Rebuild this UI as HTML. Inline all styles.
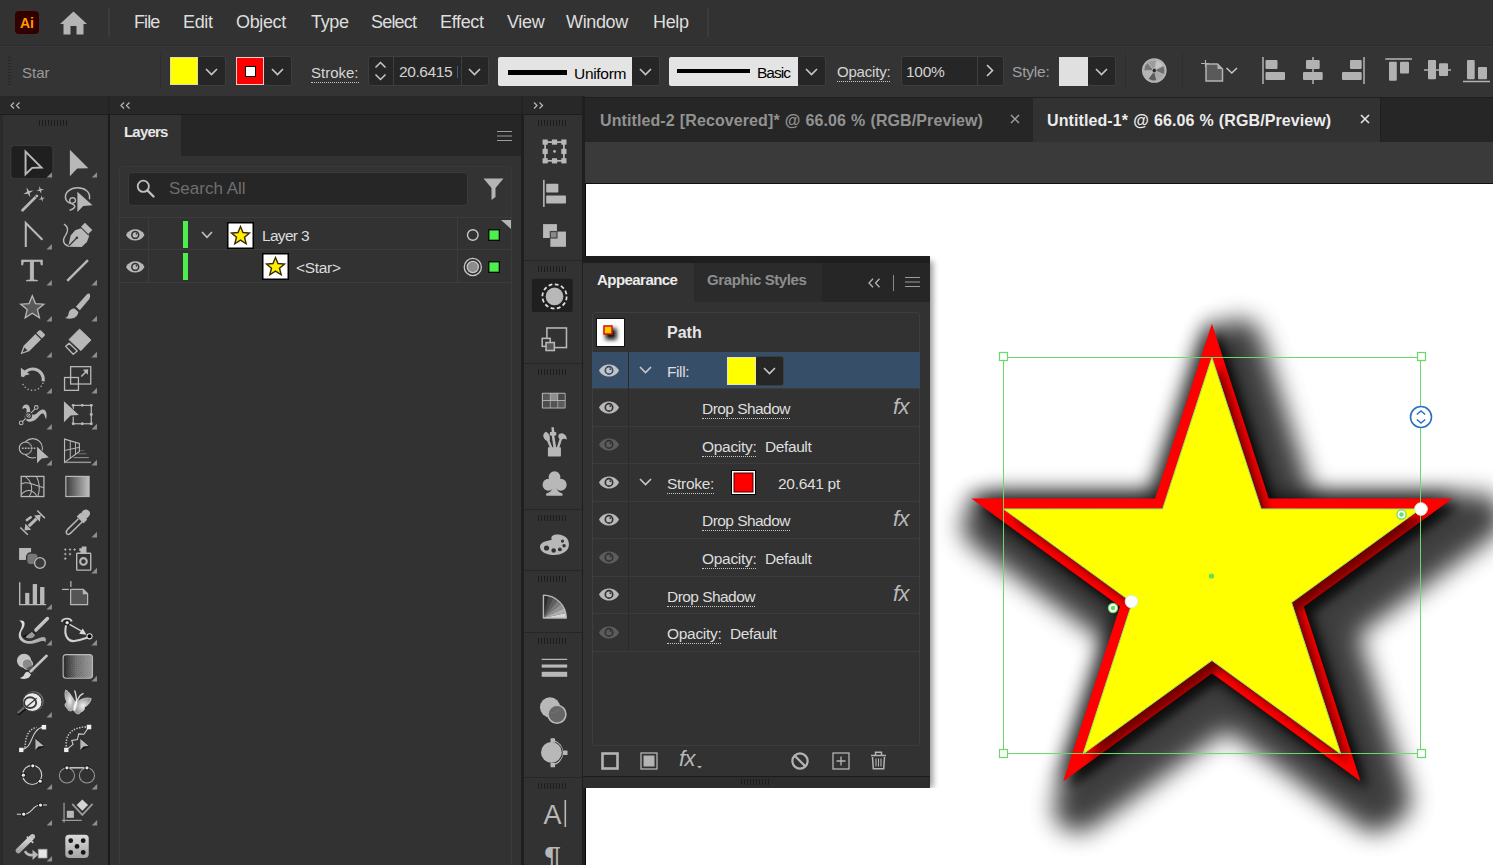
<!DOCTYPE html>
<html lang="en">
<head>
<meta charset="utf-8">
<title>Adobe Illustrator</title>
<style>
*{box-sizing:border-box;margin:0;padding:0}
html,body{width:1493px;height:865px;overflow:hidden;background:#323232}
body{position:relative;font-family:"Liberation Sans",sans-serif;color:#dcdcdc;font-size:15px}
.a{position:absolute}
.t{position:absolute;white-space:nowrap;line-height:1}
svg{position:absolute;overflow:visible}
#menubar{left:0;top:0;width:1493px;height:45px;background:#323232}
#menuline{left:0;top:45px;width:1493px;height:1px;background:#2b2b2b}
.mi{top:13px;font-size:18px;color:#dedede;letter-spacing:-0.35px}
#ctrl{left:0;top:46px;width:1493px;height:51px;background:#343434;box-shadow:inset 0 1px 0 #393939}
.dd{background:#262626;border:1px solid #3e3e3e;border-radius:3px}
.lbl{font-size:15px;color:#d6d6d6}
.dot{border-bottom:1px dotted #c8c8c8}
#strip{left:0;top:96px;width:585px;height:18px;background:#282828}
#stripline{left:0;top:114px;width:585px;height:1px;background:#1d1d1d}
#tools{left:3px;top:115px;width:105px;height:750px;background:#323232}
#layers{left:111px;top:115px;width:410px;height:750px;background:#323232}
#icons{left:524px;top:115px;width:58px;height:750px;background:#323232}
.gut{background:#1f1f1f}
.grip{height:6px;background:repeating-linear-gradient(to right,#1c1c1c 0,#1c1c1c 1px,transparent 1px,transparent 3px)}
</style>
</head>
<body>
<div class="a" id="menubar">
 <div class="a" style="left:15px;top:11px;width:24px;height:23px;background:#330000;border-radius:4px"></div>
 <div class="t" style="left:20px;top:15.5px;font-size:14px;font-weight:bold;color:#ff9a00;letter-spacing:-0.2px">Ai</div>
 <svg style="left:59px;top:11px" width="29" height="24" viewBox="0 0 29 24"><path d="M14.5 0.5 L28 13 L24.5 13 L24.5 23.5 L17.5 23.5 L17.5 15 L11.5 15 L11.5 23.5 L4.5 23.5 L4.5 13 L1 13 Z" fill="#b4b4b4"/></svg>
 <div class="a" style="left:108px;top:8px;width:2px;height:29px;background:#3c3c3c"></div>
 <div class="t mi" style="left:134px;letter-spacing:-0.9px">File</div>
 <div class="t mi" style="left:183px;letter-spacing:-0.35px">Edit</div>
 <div class="t mi" style="left:236px;letter-spacing:-0.35px">Object</div>
 <div class="t mi" style="left:311px;letter-spacing:-0.35px">Type</div>
 <div class="t mi" style="left:371px;letter-spacing:-0.8px">Select</div>
 <div class="t mi" style="left:440px;letter-spacing:-0.35px">Effect</div>
 <div class="t mi" style="left:507px;letter-spacing:-0.35px">View</div>
 <div class="t mi" style="left:566px;letter-spacing:-0.35px">Window</div>
 <div class="t mi" style="left:653px;letter-spacing:-0.35px">Help</div>
 <div class="a" style="left:707px;top:8px;width:2px;height:29px;background:#3c3c3c"></div>
</div>
<div class="a" id="menuline"></div>
<div class="a" id="ctrl">
 <div class="a" style="left:8px;top:11px;width:3px;height:28px;background:repeating-linear-gradient(to bottom,#262626 0,#262626 1px,transparent 1px,transparent 3px)"></div>
 <div class="t" style="left:22px;top:19px;font-size:15px;color:#9a9a9a">Star</div>
 <div class="a" style="left:160px;top:7px;width:1px;height:35px;background:#2e2e2e"></div>
 <div class="a dd" style="left:197px;top:10px;width:29px;height:30px"></div>
 <div class="a" style="left:170px;top:11px;width:28px;height:28px;background:#ffff00;border:1px solid #dcdcb0"></div>
 <svg style="left:205px;top:22px" width="13" height="8" viewBox="0 0 13 8"><path d="M1 1 L6.5 6.5 L12 1" fill="none" stroke="#c8c8c8" stroke-width="1.6"/></svg>
 <div class="a dd" style="left:263px;top:10px;width:29px;height:30px"></div>
 <div class="a" style="left:236px;top:11px;width:28px;height:28px;background:#ff0000;border:1px solid #f0c8c8"></div>
 <div class="a" style="left:245px;top:20px;width:11px;height:11px;background:#fff;border:1.3px solid #000"></div>
 <svg style="left:271px;top:22px" width="13" height="8" viewBox="0 0 13 8"><path d="M1 1 L6.5 6.5 L12 1" fill="none" stroke="#c8c8c8" stroke-width="1.6"/></svg>
 <div class="t lbl dot" style="left:311px;top:19px;padding-bottom:2px">Stroke:</div>
 <div class="a dd" style="left:368px;top:10px;width:121px;height:30px"></div>
 <div class="a" style="left:393px;top:11px;width:1px;height:28px;background:#3e3e3e"></div>
 <div class="a" style="left:461px;top:11px;width:1px;height:28px;background:#3e3e3e"></div>
 <svg style="left:374px;top:15px" width="13" height="20" viewBox="0 0 13 20"><path d="M1.5 6.5 L6.5 1.5 L11.5 6.5 M1.5 13.5 L6.5 18.5 L11.5 13.5" fill="none" stroke="#c8c8c8" stroke-width="1.5"/></svg>
 <div class="t" style="left:399px;top:18px;font-size:15.5px;color:#d2d2d2;letter-spacing:-0.4px">20.6415</div>
 <div class="a" style="left:457px;top:20px;width:1px;height:12px;background:#3a5a80"></div>
 <svg style="left:468px;top:22px" width="13" height="8" viewBox="0 0 13 8"><path d="M1 1 L6.5 6.5 L12 1" fill="none" stroke="#c8c8c8" stroke-width="1.6"/></svg>
 <div class="a dd" style="left:631px;top:10px;width:29px;height:30px"></div>
 <div class="a" style="left:498px;top:11px;width:134px;height:29px;background:#e4e4e4;border-radius:2px 0 0 2px"></div>
 <div class="a" style="left:508px;top:24px;width:59px;height:5px;background:#000"></div>
 <div class="t" style="left:574px;top:20px;font-size:15.5px;color:#000;letter-spacing:-0.3px">Uniform</div>
 <svg style="left:639px;top:22px" width="13" height="8" viewBox="0 0 13 8"><path d="M1 1 L6.5 6.5 L12 1" fill="none" stroke="#c8c8c8" stroke-width="1.6"/></svg>
 <div class="a dd" style="left:797px;top:10px;width:29px;height:30px"></div>
 <div class="a" style="left:669px;top:11px;width:129px;height:29px;background:#e4e4e4;border-radius:2px 0 0 2px"></div>
 <div class="a" style="left:677px;top:23px;width:73px;height:4px;background:#000"></div>
 <div class="t" style="left:757px;top:19px;font-size:15.5px;color:#000;letter-spacing:-1px">Basic</div>
 <svg style="left:805px;top:22px" width="13" height="8" viewBox="0 0 13 8"><path d="M1 1 L6.5 6.5 L12 1" fill="none" stroke="#c8c8c8" stroke-width="1.6"/></svg>
 <div class="t lbl dot" style="left:837px;top:18px;padding-bottom:2px;letter-spacing:-0.2px">Opacity:</div>
 <div class="a dd" style="left:901px;top:10px;width:103px;height:30px"></div>
 <div class="a" style="left:977px;top:11px;width:1px;height:28px;background:#3e3e3e"></div>
 <div class="t" style="left:906px;top:18px;font-size:15.5px;color:#d2d2d2;letter-spacing:-0.3px">100%</div>
 <svg style="left:986px;top:18px" width="8" height="13" viewBox="0 0 8 13"><path d="M1 1 L6.5 6.5 L1 12" fill="none" stroke="#c8c8c8" stroke-width="1.6"/></svg>
 <div class="t" style="left:1012px;top:18px;font-size:15.5px;color:#a0a0a0;letter-spacing:-0.2px">Style:</div>
 <div class="a dd" style="left:1087px;top:10px;width:29px;height:30px"></div>
 <div class="a" style="left:1059px;top:11px;width:29px;height:29px;background:#e0e0e0"></div>
 <svg style="left:1095px;top:22px" width="13" height="8" viewBox="0 0 13 8"><path d="M1 1 L6.5 6.5 L12 1" fill="none" stroke="#c8c8c8" stroke-width="1.6"/></svg>
 <div class="a" style="left:1125px;top:6px;width:1px;height:37px;background:#2e2e2e"></div>
 <div class="a" style="left:1182px;top:6px;width:1px;height:37px;background:#2e2e2e"></div>
<svg style="left:0;top:0" width="1493" height="50" viewBox="0 0 1493 50"><circle cx="1154.3" cy="24.5" r="11.5" fill="#8c8c8c" stroke="#b8b8b8" stroke-width="1.6"/><path d="M1154.3 24.5 L1156.39 14.21 A10.5 10.5 0 0 1 1163.65 19.71 Z" fill="#c4c4c4" stroke="#b8b8b8" stroke-width="0.8"/><path d="M1154.3 24.5 L1163.65 19.71 A10.5 10.5 0 0 1 1163.87 28.82 Z" fill="#6e6e6e" stroke="#b8b8b8" stroke-width="0.8"/><path d="M1154.3 24.5 L1163.87 28.82 A10.5 10.5 0 0 1 1156.89 34.68 Z" fill="#a8a8a8" stroke="#b8b8b8" stroke-width="0.8"/><path d="M1154.3 24.5 L1156.89 34.68 A10.5 10.5 0 0 1 1147.96 32.87 Z" fill="#5c5c5c" stroke="#b8b8b8" stroke-width="0.8"/><path d="M1154.3 24.5 L1147.96 32.87 A10.5 10.5 0 0 1 1143.80 24.76 Z" fill="#b4b4b4" stroke="#b8b8b8" stroke-width="0.8"/><path d="M1154.3 24.5 L1143.80 24.76 A10.5 10.5 0 0 1 1147.56 16.45 Z" fill="#787878" stroke="#b8b8b8" stroke-width="0.8"/><path d="M1154.3 24.5 L1147.56 16.45 A10.5 10.5 0 0 1 1156.39 14.21 Z" fill="#9c9c9c" stroke="#b8b8b8" stroke-width="0.8"/><circle cx="1154.3" cy="24.5" r="2.2" fill="#2a2a2a" stroke="#b8b8b8" stroke-width="0.8"/><path d="M1205.5 14 L1205.5 21 M1201 17.5 L1209 17.5" stroke="#b2b2b2" stroke-width="1.2" fill="none"/>
<path d="M1206 18 L1217.5 18 L1222.5 23 L1222.5 35 L1206 35 Z" fill="#5a5a5a" stroke="#b2b2b2" stroke-width="1.5"/>
<path d="M1217.5 18 L1217.5 23 L1222.5 23 Z" fill="#b2b2b2"/>
<path d="M1226.5 22 L1231.8 27 L1237 22" fill="none" stroke="#c8c8c8" stroke-width="1.5"/><rect x="1262.25" y="11.0" width="1.5" height="27.0" fill="#b2b2b2"/><rect x="1265.5" y="14.0" width="12.0" height="9.0" rx="1" fill="#b2b2b2"/><rect x="1265.5" y="26.0" width="19.5" height="8.0" rx="1" fill="#b2b2b2"/><rect x="1312.25" y="11.0" width="1.5" height="27.0" fill="#b2b2b2"/><rect x="1306.0" y="14.0" width="13.7" height="9.0" rx="1" fill="#b2b2b2"/><rect x="1303.0" y="26.0" width="19.7" height="8.0" rx="1" fill="#b2b2b2"/><rect x="1363.25" y="11.0" width="1.5" height="27.0" fill="#b2b2b2"/><rect x="1350.0" y="14.0" width="11.7" height="9.0" rx="1" fill="#b2b2b2"/><rect x="1342.0" y="26.0" width="19.7" height="8.0" rx="1" fill="#b2b2b2"/><rect x="1385.3" y="12.25" width="26.7" height="1.5" fill="#b2b2b2"/><rect x="1389.0" y="15.7" width="7.8" height="19.0" rx="1" fill="#b2b2b2"/><rect x="1400.0" y="15.7" width="9.0" height="11.9" rx="1" fill="#b2b2b2"/><rect x="1424.0" y="23.25" width="27.0" height="1.5" fill="#b2b2b2"/><rect x="1428.0" y="14.0" width="8.0" height="19.3" rx="1" fill="#b2b2b2"/><rect x="1439.0" y="17.2" width="9.0" height="12.9" rx="1" fill="#b2b2b2"/><rect x="1463.0" y="34.75" width="27.0" height="1.5" fill="#b2b2b2"/><rect x="1467.0" y="14.0" width="7.7" height="19.3" rx="1" fill="#b2b2b2"/><rect x="1478.0" y="21.0" width="9.0" height="12.3" rx="1" fill="#b2b2b2"/></svg>
</div>
<div class="a" id="strip">
 <svg style="left:10px;top:6px" width="11" height="7" viewBox="0 0 11 7"><path d="M4 0.5 L1 3.5 L4 6.5 M9.5 0.5 L6.5 3.5 L9.5 6.5" fill="none" stroke="#b4b4b4" stroke-width="1.3"/></svg>
 <svg style="left:120px;top:6px" width="11" height="7" viewBox="0 0 11 7"><path d="M4 0.5 L1 3.5 L4 6.5 M9.5 0.5 L6.5 3.5 L9.5 6.5" fill="none" stroke="#b4b4b4" stroke-width="1.3"/></svg>
 <svg style="left:533px;top:6px" width="11" height="7" viewBox="0 0 11 7"><path d="M1 0.5 L4 3.5 L1 6.5 M6.5 0.5 L9.5 3.5 L6.5 6.5" fill="none" stroke="#b4b4b4" stroke-width="1.3"/></svg>
</div>
<div class="a" id="stripline"></div>
<div class="a" style="left:0;top:115px;width:3px;height:750px;background:#2a2a2a"></div>
<div class="a" style="left:108px;top:114px;width:2px;height:751px;background:#1b1b1b"></div>
<div class="a" style="left:108px;top:97px;width:2px;height:17px;background:#232323"></div>
<div class="a gut" style="left:521px;top:114px;width:3px;height:751px"></div>
<div class="a" style="left:521px;top:97px;width:2px;height:17px;background:#232323"></div>
<div class="a gut" style="left:582px;top:96px;width:3px;height:769px"></div>
<div class="a" id="tools"></div>
<div class="a grip" style="left:39px;top:120px;width:29px"></div>
<svg style="left:0;top:0;overflow:hidden" width="110" height="865" viewBox="0 0 110 865">
<g transform="translate(0,90) scale(0.15029)"><rect x="72" y="370" width="280" height="220" rx="22" fill="#1f1f1f" stroke="#3e3e3e" stroke-width="6"/><polygon points="170,410 170,560 214,518 276,516" fill="none" stroke="#b8b8b8" stroke-width="13" stroke-linejoin="miter"/><polygon points="465,398 465,574 514,522 588,520" fill="#b8b8b8"/><polygon points="346,547 346,583 310,583" fill="#8e8e8e"/><polygon points="646,547 646,583 610,583" fill="#8e8e8e"/></g>
<g transform="translate(8,180) scale(0.08673)"><line x1="168" y1="348" x2="333" y2="183" stroke="#b8b8b8" stroke-width="32" stroke-linecap="round"/><line x1="305" y1="180" x2="338" y2="213" stroke="#323232" stroke-width="7"/><polygon points="213.8,83.7 242.2,126.6 293.3,120.8 250.4,149.2 256.2,200.3 227.8,157.4 176.7,163.2 219.6,134.8" fill="#b8b8b8"/><polygon points="360.1,70.6 378.5,103.7 416.4,103.1 383.3,121.5 383.9,159.4 365.5,126.3 327.6,126.9 360.7,108.5" fill="#b8b8b8"/><polygon points="380.2,178.3 395.5,205.5 426.7,205.2 399.5,220.5 399.8,251.7 384.5,224.5 353.3,224.8 380.5,209.5" fill="#b8b8b8"/><path d="M 940 215 C 950 130 880 90 800 90 C 720 90 660 140 662 200 C 664 250 720 285 762 262 C 792 245 780 205 745 205 C 712 205 700 240 722 262 C 742 285 775 280 770 305 C 765 335 738 338 715 347" fill="none" stroke="#b8b8b8" stroke-width="17" stroke-linecap="round"/><polygon points="792,120 792,385 872,305 990,296" fill="#323232"/><polygon points="800,135 800,368 868,300 975,292" fill="#b8b8b8"/><path d="M 205 772 L 205 495 L 397 690" fill="none" stroke="#b8b8b8" stroke-width="24" stroke-linejoin="miter"/><polygon points="506,738 506,800 444,800" fill="#8e8e8e"/><path d="M 650 512 C 705 545 690 600 660 645 C 622 695 640 752 700 762" fill="none" stroke="#b8b8b8" stroke-width="15" stroke-linecap="round"/><polygon points="693,770 722,640 775,580 850,553 938,641 910,716 850,772" fill="#b8b8b8"/><line x1="700" y1="762" x2="792" y2="668" stroke="#323232" stroke-width="15"/><circle cx="795" cy="665" r="14" fill="#323232"/><polygon points="887,493 972,576 926,622 842,538" fill="#b8b8b8"/><line x1="838" y1="548" x2="930" y2="640" stroke="#323232" stroke-width="10"/></g>
<g transform="translate(8,252) scale(0.08673)"><line x1="683" y1="332" x2="922" y2="93" stroke="#b8b8b8" stroke-width="28"/><polygon points="506,323 506,385 444,385" fill="#8e8e8e"/><polygon points="1026,321 1026,385 962,385" fill="#8e8e8e"/><polygon points="280.0,505.0 316.4,594.8 413.1,601.7 339.0,664.2 362.3,758.3 280.0,707.0 197.7,758.3 221.0,664.2 146.9,601.7 243.6,594.8" fill="#585858" stroke="#b8b8b8" stroke-width="15" stroke-linejoin="miter"/><path d="M 782 632 L 905 492 Q 932 468 945 488 Q 952 515 935 545 L 828 672 Z" fill="#b8b8b8"/><path d="M 768 652 L 812 692 Q 800 760 730 768 Q 690 771 658 760 Q 700 745 700 700 Q 712 655 768 652 Z" fill="#b8b8b8"/><polygon points="506,738 506,800 444,800" fill="#8e8e8e"/><polygon points="1026,736 1026,800 962,800" fill="#8e8e8e"/></g>
<g transform="translate(8,324) scale(0.08673)"><polygon points="145.0,350.0 180.4,251.0 316.8,114.5 380.5,178.2 244.0,314.6" fill="#b8b8b8"/><polygon points="167.6,327.4 190.3,270.8 224.2,304.7" fill="#323232"/><polygon points="326.7,104.6 360.7,70.7 377.6,70.7 424.3,117.4 424.3,134.3 390.4,168.3" fill="#b8b8b8"/><polygon points="506,323 506,385 444,385" fill="#8e8e8e"/><polygon points="1026,321 1026,385 962,385" fill="#8e8e8e"/><polygon points="825,58 957,185 840,307 703,180" fill="#b8b8b8" stroke="#b8b8b8" stroke-width="10" stroke-linejoin="round"/><polygon points="705,222 798,312 752,348 665,258" fill="none" stroke="#b8b8b8" stroke-width="16" stroke-linejoin="round"/><path d="M 167.2 608.4 A 122 122 0 0 1 405.1 661.2" fill="none" stroke="#b8b8b8" stroke-width="36"/><polygon points="148,505 150,605 250,578" fill="#b8b8b8"/><circle cx="402.5" cy="682.8" r="9" fill="#b8b8b8"/><circle cx="382.1" cy="718.7" r="9" fill="#b8b8b8"/><circle cx="351.2" cy="746.0" r="9" fill="#b8b8b8"/><circle cx="313.1" cy="761.8" r="9" fill="#b8b8b8"/><circle cx="271.9" cy="764.3" r="9" fill="#b8b8b8"/><circle cx="232.2" cy="753.3" r="9" fill="#b8b8b8"/><circle cx="198.2" cy="729.9" r="9" fill="#b8b8b8"/><circle cx="173.6" cy="696.7" r="9" fill="#b8b8b8"/><rect x="722" y="492" width="232" height="200" fill="none" stroke="#b8b8b8" stroke-width="15"/><rect x="652" y="617" width="160" height="148" fill="none" stroke="#b8b8b8" stroke-width="15"/><line x1="845" y1="605" x2="905" y2="545" stroke="#b8b8b8" stroke-width="18"/><polygon points="862,528 925,522 920,586" fill="#b8b8b8"/><polygon points="506,738 506,800 444,800" fill="#8e8e8e"/><polygon points="1026,736 1026,800 962,800" fill="#8e8e8e"/></g>
<g transform="translate(8,396) scale(0.08673)"><path d="M 163 152 C 163 100 215 82 238 110 C 268 150 240 205 287 215 C 332 222 350 160 402 155 C 445 152 452 215 440 268 C 425 250 425 208 400 203 C 360 203 340 292 260 296 C 210 296 178 260 198 215 C 213 185 225 160 205 142 C 190 132 175 147 163 152 Z" fill="#b8b8b8"/><line x1="165" y1="298" x2="312" y2="148" stroke="#323232" stroke-width="30"/><line x1="165" y1="298" x2="312" y2="148" stroke="#b8b8b8" stroke-width="13"/><circle cx="237" cy="226" r="34" fill="none" stroke="#323232" stroke-width="14"/><circle cx="152" cy="310" r="21" fill="#323232" stroke="#b8b8b8" stroke-width="12"/><circle cx="326" cy="132" r="21" fill="#323232" stroke="#b8b8b8" stroke-width="12"/><polygon points="506,323 506,385 444,385" fill="#8e8e8e"/><polygon points="1026,321 1026,385 962,385" fill="#8e8e8e"/><rect x="752" y="108" width="208" height="212" fill="none" stroke="#b8b8b8" stroke-width="14"/><circle cx="752" cy="108" r="17" fill="#b8b8b8"/><circle cx="856" cy="108" r="17" fill="#b8b8b8"/><circle cx="960" cy="108" r="17" fill="#b8b8b8"/><circle cx="960" cy="214" r="17" fill="#b8b8b8"/><circle cx="752" cy="320" r="17" fill="#b8b8b8"/><circle cx="856" cy="320" r="17" fill="#b8b8b8"/><circle cx="960" cy="320" r="17" fill="#b8b8b8"/><polygon points="632,40 632,330 725,240 840,232" fill="#323232"/><polygon points="645,60 645,302 722,226 818,220" fill="#b8b8b8"/><circle cx="285" cy="603" r="112" fill="none" stroke="#b8b8b8" stroke-width="13"/><circle cx="202" cy="603" r="72" fill="#323232" stroke="#b8b8b8" stroke-width="13"/><path d="M 232 538 A 72 72 0 0 1 232 668" fill="none" stroke="#777" stroke-width="12"/><line x1="160" y1="603" x2="330" y2="603" stroke="#b8b8b8" stroke-width="18" stroke-dasharray="20 14"/><polygon points="322,560 322,800 395,735 492,722" fill="#323232"/><polygon points="335,585 335,775 388,722 470,708" fill="#b8b8b8"/><polygon points="652,497 823,548 823,640 652,765" fill="none" stroke="#b8b8b8" stroke-width="13" stroke-linejoin="miter"/><line x1="718" y1="517" x2="718" y2="718" stroke="#b8b8b8" stroke-width="11"/><line x1="778" y1="535" x2="778" y2="675" stroke="#b8b8b8" stroke-width="11"/><line x1="652" y1="628" x2="823" y2="592" stroke="#b8b8b8" stroke-width="11"/><line x1="832" y1="630" x2="880" y2="630" stroke="#777" stroke-width="8"/><line x1="805" y1="666" x2="905" y2="666" stroke="#7e7e7e" stroke-width="10"/><line x1="758" y1="710" x2="932" y2="710" stroke="#888" stroke-width="13"/><line x1="655" y1="765" x2="957" y2="765" stroke="#959595" stroke-width="17"/><polygon points="506,738 506,800 444,800" fill="#8e8e8e"/><polygon points="1026,736 1026,800 962,800" fill="#8e8e8e"/></g>
<g transform="translate(8,468) scale(0.08673)"><rect x="152" y="97" width="262" height="232" fill="none" stroke="#b8b8b8" stroke-width="15"/><path d="M 200 100 C 270 150 300 250 245 325 M 330 100 C 370 180 370 250 345 325 M 155 185 C 240 140 320 215 412 225 M 155 305 C 215 235 290 250 330 320" fill="none" stroke="#b8b8b8" stroke-width="12"/><defs><linearGradient id="tg1" x1="0" x2="1" y1="0" y2="0"><stop offset="0" stop-color="#3a3a3a"/><stop offset="1" stop-color="#c0c0c0"/></linearGradient></defs><rect x="667" y="97" width="268" height="232" fill="url(#tg1)" stroke="#b8b8b8" stroke-width="14"/><line x1="142" y1="687" x2="228" y2="770" stroke="#b8b8b8" stroke-width="17"/><line x1="337" y1="490" x2="425" y2="578" stroke="#b8b8b8" stroke-width="17"/><line x1="240" y1="670" x2="330" y2="585" stroke="#b8b8b8" stroke-width="36"/><polygon points="190,722 200,640 268,712" fill="#b8b8b8"/><polygon points="378,540 366,620 300,548" fill="#b8b8b8"/><line x1="218" y1="600" x2="262" y2="568" stroke="#b8b8b8" stroke-width="30" stroke-linecap="round"/><path d="M 812 585 L 690 705 C 660 735 670 770 700 765 C 720 760 730 745 745 730 L 865 612" fill="none" stroke="#b8b8b8" stroke-width="17" stroke-linejoin="round"/><path d="M 800 560 L 835 525 L 848 538 C 850 500 890 470 925 495 C 960 525 925 570 890 580 L 905 595 L 870 630 Z" fill="#b8b8b8" stroke="#b8b8b8" stroke-width="12" stroke-linejoin="round"/><polygon points="1026,736 1026,800 962,800" fill="#8e8e8e"/></g>
<g transform="translate(8,540) scale(0.08673)"><rect x="128" y="92" width="138" height="138" fill="#b8b8b8"/><rect x="215" y="150" width="132" height="135" rx="45" fill="#777" stroke="#323232" stroke-width="16"/><circle cx="368" cy="265" r="72" fill="#323232"/><circle cx="368" cy="265" r="62" fill="#3a3a3a" stroke="#b8b8b8" stroke-width="16"/><rect x="792" y="152" width="162" height="195" rx="8" fill="none" stroke="#b8b8b8" stroke-width="16"/><circle cx="870" cy="247" r="38" fill="none" stroke="#b8b8b8" stroke-width="24"/><path d="M 835 150 V 128 H 822 V 95 H 850 V 75 H 905 V 150 Z" fill="#b8b8b8"/><polygon points="660.0,91.0 666.4,103.6 679.0,110.0 666.4,116.4 660.0,129.0 653.6,116.4 641.0,110.0 653.6,103.6" fill="#b8b8b8"/><polygon points="715.0,91.0 721.4,103.6 734.0,110.0 721.4,116.4 715.0,129.0 708.6,116.4 696.0,110.0 708.6,103.6" fill="#b8b8b8"/><polygon points="768.0,91.0 774.4,103.6 787.0,110.0 774.4,116.4 768.0,129.0 761.6,116.4 749.0,110.0 761.6,103.6" fill="#b8b8b8"/><polygon points="660.0,143.0 666.4,155.6 679.0,162.0 666.4,168.4 660.0,181.0 653.6,168.4 641.0,162.0 653.6,155.6" fill="#b8b8b8"/><polygon points="715.0,143.0 721.4,155.6 734.0,162.0 721.4,168.4 715.0,181.0 708.6,168.4 696.0,162.0 708.6,155.6" fill="#b8b8b8"/><polygon points="660.0,196.0 666.4,208.6 679.0,215.0 666.4,221.4 660.0,234.0 653.6,221.4 641.0,215.0 653.6,208.6" fill="#b8b8b8"/><polygon points="1026,321 1026,385 962,385" fill="#8e8e8e"/><path d="M 135 488 V 745 H 440" fill="none" stroke="#b8b8b8" stroke-width="16"/><rect x="198" y="610" width="48" height="135" fill="#b8b8b8"/><rect x="285" y="508" width="50" height="237" fill="#b8b8b8"/><rect x="370" y="542" width="50" height="203" fill="#b8b8b8"/><polygon points="506,738 506,800 444,800" fill="#8e8e8e"/><line x1="725" y1="473" x2="725" y2="542" stroke="#b8b8b8" stroke-width="14"/><line x1="623" y1="570" x2="702" y2="570" stroke="#b8b8b8" stroke-width="14"/><polygon points="722,570 868,570 918,620 918,745 722,745" fill="#555" stroke="#b8b8b8" stroke-width="14" stroke-linejoin="round"/><polygon points="862,566 862,626 922,626" fill="#b8b8b8"/></g>
<g transform="translate(8,612) scale(0.08673)"><defs><linearGradient id="tg2" x1="0" x2="1" y1="0" y2="1"><stop offset="0" stop-color="#e8e8e8"/><stop offset="1" stop-color="#a0a0a0"/></linearGradient><linearGradient id="tg3" x1="0" x2="1" y1="0" y2="0"><stop offset="0" stop-color="#1c1c1c"/><stop offset="0.45" stop-color="#6e6e6e"/><stop offset="1" stop-color="#9a9a9a"/></linearGradient><pattern id="tn" width="26" height="26" patternUnits="userSpaceOnUse"><circle cx="6" cy="7" r="4" fill="#cfcfcf" opacity=".55"/><circle cx="19" cy="17" r="4.5" fill="#e0e0e0" opacity=".45"/><circle cx="17" cy="4" r="3" fill="#000" opacity=".45"/><circle cx="5" cy="20" r="3.5" fill="#000" opacity=".4"/></pattern></defs><path d="M 130 100 C 205 85 205 150 165 205 C 135 250 145 300 205 328 C 285 355 330 292 418 288 C 442 298 442 330 430 348 C 400 305 330 372 232 366 C 150 360 108 300 128 240 C 148 190 190 130 130 100 Z" fill="url(#tg2)"/><path d="M 165 275 C 200 310 260 320 300 290 L 315 245 L 270 225 C 235 245 200 275 165 275 Z" fill="#0c0c0c"/><path d="M 200 290 C 225 265 245 245 275 228 L 312 262 C 305 300 250 320 200 290 Z" fill="#9a9a9a"/><line x1="322" y1="208" x2="455" y2="75" stroke="url(#tg2)" stroke-width="40" stroke-linecap="round"/><polygon points="506,323 506,385 444,385" fill="#8e8e8e"/><polygon points="1026,321 1026,385 962,385" fill="#8e8e8e"/><path d="M 668 160 C 640 280 700 345 765 335 C 840 320 900 300 930 290" fill="none" stroke="#d0d0d0" stroke-width="24" stroke-linecap="round"/><path d="M 620 115 C 625 70 720 60 735 110" fill="none" stroke="#d0d0d0" stroke-width="22"/><line x1="705" y1="140" x2="880" y2="240" stroke="#d8d8d8" stroke-width="14"/><polygon points="905,262 820,250 862,190" fill="#d8d8d8"/><circle cx="682" cy="125" r="26" fill="#e8e8e8" stroke="#111" stroke-width="12"/><circle cx="940" cy="280" r="30" fill="#050505" stroke="#d8d8d8" stroke-width="12"/><circle cx="185" cy="562" r="82" fill="#c4c4c4"/><circle cx="222" cy="600" r="60" fill="#8a8a8a" stroke="#e0e0e0" stroke-width="10"/><path d="M 205 655 L 285 610 L 300 700 Z" fill="#555"/><line x1="262" y1="685" x2="445" y2="505" stroke="url(#tg2)" stroke-width="30" stroke-linecap="round"/><path d="M 232 690 L 265 722 Q 250 770 185 772 Q 160 772 135 762 Q 185 745 190 715 Q 200 690 232 690 Z" fill="#d8d8d8"/><rect x="636" y="492" width="338" height="272" rx="34" fill="url(#tg3)"/><rect x="636" y="492" width="338" height="272" rx="34" fill="url(#tn)" stroke="#b8b8b8" stroke-width="13"/><polygon points="1026,736 1026,800 962,800" fill="#8e8e8e"/></g>
<g transform="translate(8,684) scale(0.08673)"><defs><radialGradient id="tg4" cx="0.5" cy="0.5" r="0.6"><stop offset="0" stop-color="#f0f0f0"/><stop offset="1" stop-color="#8a8a8a"/></radialGradient></defs><line x1="125" y1="338" x2="195" y2="278" stroke="#111" stroke-width="40" stroke-linecap="round"/><line x1="118" y1="330" x2="185" y2="272" stroke="#666" stroke-width="26" stroke-linecap="round"/><ellipse cx="292" cy="200" rx="122" ry="118" fill="#666"/><ellipse cx="280" cy="208" rx="112" ry="108" fill="#eaeaea" stroke="#1a1a1a" stroke-width="10"/><ellipse cx="255" cy="215" rx="70" ry="62" fill="none" stroke="#3a3a3a" stroke-width="22"/><line x1="205" y1="270" x2="330" y2="165" stroke="#3a3a3a" stroke-width="14"/><polygon points="506,323 506,385 444,385" fill="#8e8e8e"/><path d="M 770 200 C 740 150 700 80 665 70 C 650 110 655 170 680 210 C 650 225 650 260 680 275 C 690 310 720 320 745 300 Z" fill="url(#tg4)" stroke="#e0e0e0" stroke-width="8"/><path d="M 800 205 C 850 165 920 150 960 170 C 950 215 915 255 880 265 C 890 300 860 320 840 320 C 830 350 790 355 770 320 Z" fill="url(#tg4)" stroke="#e0e0e0" stroke-width="8"/><path d="M 790 185 C 785 140 780 100 770 80 M 800 190 C 815 150 840 120 865 110" fill="none" stroke="#d8d8d8" stroke-width="16" stroke-linecap="round"/><ellipse cx="775" cy="250" rx="16" ry="68" transform="rotate(14 775 250)" fill="#f4f4f4"/><path d="M 155 760 C 300 740 250 520 410 497" fill="none" stroke="#d0d0d0" stroke-width="12"/><path d="M 195 735 C 200 620 230 520 330 500" fill="none" stroke="#d0d0d0" stroke-width="16" stroke-dasharray="16 16"/><rect x="128" y="735" width="50" height="50" fill="#f0f0f0"/><rect x="388" y="472" width="52" height="52" fill="#f0f0f0"/><polygon points="320,622 420,722 318,762" fill="#111"/><polygon points="316,632 316,760 352,722 412,716" fill="#b8b8b8"/><path d="M 672 760 L 750 695 L 735 650 L 800 640 L 815 575 L 875 580 L 930 498" fill="none" stroke="#d0d0d0" stroke-width="12"/><path d="M 672 720 C 660 600 720 500 900 495" fill="none" stroke="#d0d0d0" stroke-width="16" stroke-dasharray="16 16"/><rect x="647" y="735" width="50" height="50" fill="#f0f0f0"/><rect x="908" y="470" width="52" height="52" fill="#f0f0f0"/><polygon points="838,622 940,722 836,762" fill="#111"/><polygon points="834,632 834,760 870,722 930,716" fill="#b8b8b8"/></g>
<g transform="translate(8,756) scale(0.12594)"><defs><linearGradient id="tg5" x1="0" x2="0" y1="0" y2="1"><stop offset="0" stop-color="#dcdcdc"/><stop offset="1" stop-color="#a4a4a4"/></linearGradient></defs><circle cx="192" cy="150" r="76" fill="none" stroke="#d0d0d0" stroke-width="9"/><circle cx="197" cy="78" r="20" fill="#161616"/><circle cx="197" cy="78" r="13" fill="#e8e8e8"/><circle cx="122" cy="152" r="20" fill="#161616"/><circle cx="122" cy="152" r="13" fill="#e8e8e8"/><circle cx="255" cy="200" r="20" fill="#161616"/><circle cx="255" cy="200" r="13" fill="#e8e8e8"/><polygon points="350,222 350,266 306,266" fill="#8e8e8e"/><polygon points="708,222 708,266 664,266" fill="#8e8e8e"/><circle cx="468" cy="155" r="60" fill="none" stroke="#9a9a9a" stroke-width="8"/><circle cx="627" cy="155" r="60" fill="none" stroke="#9a9a9a" stroke-width="8"/><line x1="468" y1="94" x2="627" y2="94" stroke="#e8e8e8" stroke-width="10"/><circle cx="468" cy="94" r="20" fill="#161616"/><circle cx="468" cy="94" r="13" fill="#e8e8e8"/><circle cx="627" cy="94" r="20" fill="#161616"/><circle cx="627" cy="94" r="13" fill="#e8e8e8"/><path d="M 70 462 L 125 462 C 195 462 190 390 258 390 L 310 390" fill="none" stroke="#d0d0d0" stroke-width="8"/><circle cx="125" cy="462" r="20" fill="#161616"/><circle cx="125" cy="462" r="13" fill="#e8e8e8"/><circle cx="258" cy="390" r="20" fill="#161616"/><circle cx="258" cy="390" r="13" fill="#e8e8e8"/><polygon points="350,508 350,552 306,552" fill="#8e8e8e"/><polygon points="708,508 708,552 664,552" fill="#8e8e8e"/><path d="M 445 372 V 528 M 428 511 H 585" fill="none" stroke="#9a9a9a" stroke-width="10"/><rect x="467" y="435" width="56" height="56" fill="#b8b8b8"/><path d="M 510 380 L 590 468 L 672 380" fill="none" stroke="#9a9a9a" stroke-width="14"/><polygon points="590,345 636,390 590,435 545,390" fill="#d4d4d4"/><line x1="82" y1="752" x2="185" y2="650" stroke="url(#tg5)" stroke-width="42" stroke-linecap="round"/><line x1="150" y1="640" x2="200" y2="690" stroke="#c8c8c8" stroke-width="14"/><circle cx="195" cy="640" r="20" fill="#c0c0c0"/><path d="M 135 755 C 150 785 180 790 205 785" fill="none" stroke="#b8b8b8" stroke-width="20"/><polygon points="195,745 240,785 195,825" fill="#b8b8b8"/><rect x="240" y="740" width="70" height="70" fill="#e6e6e6" stroke="#999" stroke-width="6"/><polygon points="350,794 350,838 306,838" fill="#8e8e8e"/><rect x="455" y="625" width="186" height="184" rx="28" fill="url(#tg5)"/><circle cx="498" cy="672" r="19" fill="#161616"/><circle cx="597" cy="672" r="19" fill="#161616"/><circle cx="548" cy="718" r="19" fill="#161616"/><circle cx="498" cy="766" r="19" fill="#161616"/><circle cx="597" cy="766" r="19" fill="#161616"/></g>
</svg>
<div class="t" style="left:21px;top:254.4px;font-family:'Liberation Serif',serif;font-size:32px;color:#b8b8b8;-webkit-text-stroke:0.6px #b8b8b8;transform:scaleX(1.12);transform-origin:left top">T</div>
<div class="a" id="layers">
 <div class="a" style="left:0;top:0;width:410px;height:41px;background:#262626"></div>
 <div class="a" style="left:0;top:0;width:70px;height:41px;background:#323232"></div>
 <div class="t" style="left:13px;top:9px;font-size:15px;font-weight:bold;color:#e6e6e6;letter-spacing:-0.8px">Layers</div>
 <div class="a" style="left:386px;top:16px;width:15px;height:1.2px;background:#9c9c9c;box-shadow:0 4.5px 0 #9c9c9c,0 9px 0 #9c9c9c"></div>
 <div class="a" style="left:8px;top:51px;width:393px;height:51px;border:1px solid #383838;border-bottom:none;border-radius:3px 3px 0 0;background:#333"></div>
 <div class="a" style="left:17px;top:57px;width:340px;height:34px;background:#262626;border:1px solid #3a3a3a;border-radius:4px"></div>
 <svg style="left:25px;top:64px" width="20" height="20" viewBox="0 0 20 20"><circle cx="7.3" cy="7.3" r="5.6" fill="none" stroke="#c0c0c0" stroke-width="1.8"/><path d="M11.5 11.5 L17.5 17.5" stroke="#c0c0c0" stroke-width="2.4" stroke-linecap="round"/></svg>
 <div class="t" style="left:58px;top:65px;font-size:17px;color:#6e6e6e;letter-spacing:0px">Search All</div>
 <svg style="left:372px;top:63px" width="21" height="23" viewBox="0 0 21 23"><path d="M0.5 0.5 L20.5 0.5 L12.5 10 L12.5 19 L8.5 22 L8.5 10 Z" fill="#b4b4b4"/></svg>
 <div class="a" style="left:8px;top:102px;width:393px;height:648px;border:1px solid #3c3c3c;border-bottom:none;background:#323232"></div>
 <div class="a" style="left:9px;top:134px;width:391px;height:1px;background:#3c3c3c"></div>
 <div class="a" style="left:9px;top:167px;width:391px;height:1px;background:#3c3c3c"></div>
 <div class="a" style="left:37px;top:103px;width:1px;height:64px;background:#3c3c3c"></div>
 <div class="a" style="left:346px;top:103px;width:1px;height:64px;background:#3c3c3c"></div>
<svg style="left:14.5px;top:113.5px" width="18.5" height="12" viewBox="0 0 20 13"><path d="M0 6.4 C4.2 -1.6 15.8 -1.6 20 6.4 C15.8 14.4 4.2 14.4 0 6.4 Z" fill="#b8b8b8"/><circle cx="10" cy="6.4" r="3.7" fill="#b8b8b8" stroke="#323232" stroke-width="1.7"/><circle cx="11.3" cy="5.2" r="0.9" fill="#323232"/></svg>
<svg style="left:14.5px;top:145.5px" width="18.5" height="12" viewBox="0 0 20 13"><path d="M0 6.4 C4.2 -1.6 15.8 -1.6 20 6.4 C15.8 14.4 4.2 14.4 0 6.4 Z" fill="#b8b8b8"/><circle cx="10" cy="6.4" r="3.7" fill="#b8b8b8" stroke="#323232" stroke-width="1.7"/><circle cx="11.3" cy="5.2" r="0.9" fill="#323232"/></svg>
 <div class="a" style="left:72px;top:106px;width:5px;height:27px;background:#4fee4f"></div>
 <div class="a" style="left:72px;top:138px;width:5px;height:27px;background:#4fee4f"></div>
 <svg style="left:90px;top:116px" width="12" height="8" viewBox="0 0 12 8"><path d="M1 1 L6 6.3 L11 1" fill="none" stroke="#c0c0c0" stroke-width="1.6"/></svg>
<svg style="left:116px;top:107px" width="27" height="27" viewBox="0 0 27 27"><rect x="0.75" y="0.75" width="25.5" height="25.5" fill="#fff" stroke="#000" stroke-width="1.5"/><path d="M13.5 4.5 L16 10.5 L22.5 11 L17.5 15.3 L19.2 21.8 L13.5 18.2 L7.8 21.8 L9.5 15.3 L4.5 11 L11 10.5 Z" fill="#ffee00" stroke="#3a2a00" stroke-width="1.4" stroke-linejoin="miter"/></svg>
<svg style="left:151px;top:138px" width="27" height="27" viewBox="0 0 27 27"><rect x="0.75" y="0.75" width="25.5" height="25.5" fill="#fff" stroke="#000" stroke-width="1.5"/><path d="M13.5 4.5 L16 10.5 L22.5 11 L17.5 15.3 L19.2 21.8 L13.5 18.2 L7.8 21.8 L9.5 15.3 L4.5 11 L11 10.5 Z" fill="#ffee00" stroke="#3a2a00" stroke-width="1.4" stroke-linejoin="miter"/></svg>
 <div class="t" style="left:151px;top:113px;font-size:15.5px;color:#dcdcdc;letter-spacing:-0.7px">Layer 3</div>
 <div class="t" style="left:185px;top:145px;font-size:15.5px;color:#dcdcdc;letter-spacing:-0.3px">&lt;Star&gt;</div>
 <svg style="left:350px;top:103px" width="52" height="64" viewBox="0 0 52 64">
  <circle cx="11.8" cy="17" r="5.3" fill="none" stroke="#c8c8c8" stroke-width="1.4"/>
  <rect x="27.8" y="11.8" width="10.5" height="10.5" fill="#4fee4f" stroke="#000" stroke-width="1.2"/>
  <path d="M40 2 L50 2 L50 11 Z" fill="#b4b4b4"/>
  <circle cx="11.8" cy="49" r="8.6" fill="none" stroke="#c8c8c8" stroke-width="1.3"/>
  <circle cx="11.8" cy="49" r="5.6" fill="#8c8c8c" stroke="#c8c8c8" stroke-width="1.2"/>
  <rect x="27.8" y="43.8" width="10.5" height="10.5" fill="#4fee4f" stroke="#000" stroke-width="1.2"/>
 </svg>
</div>
<div class="a" id="icons"></div>
<div class="a" style="left:524px;top:260px;width:58px;height:1px;background:#262626"></div>
<div class="a" style="left:524px;top:363px;width:58px;height:1px;background:#262626"></div>
<div class="a" style="left:524px;top:509px;width:58px;height:1px;background:#262626"></div>
<div class="a" style="left:524px;top:570px;width:58px;height:1px;background:#262626"></div>
<div class="a" style="left:524px;top:632px;width:58px;height:1px;background:#262626"></div>
<div class="a" style="left:524px;top:777px;width:58px;height:1px;background:#262626"></div>
<div class="a grip" style="left:538px;top:120px;width:29px"></div>
<div class="a grip" style="left:538px;top:266px;width:29px"></div>
<div class="a grip" style="left:538px;top:369px;width:29px"></div>
<div class="a grip" style="left:538px;top:515px;width:29px"></div>
<div class="a grip" style="left:538px;top:576px;width:29px"></div>
<div class="a grip" style="left:538px;top:638px;width:29px"></div>
<div class="a grip" style="left:538px;top:783px;width:29px"></div>
<svg style="left:0;top:0;overflow:hidden" width="585" height="865" viewBox="0 0 585 865">
<g transform="translate(524,114) scale(0.17340)"><rect x="122" y="162" width="108" height="108" fill="none" stroke="#b8b8b8" stroke-width="10"/><rect x="107" y="147" width="30" height="30" fill="#b8b8b8"/><rect x="161" y="147" width="30" height="30" fill="#b8b8b8"/><rect x="215" y="147" width="30" height="30" fill="#b8b8b8"/><rect x="107" y="201" width="30" height="30" fill="#b8b8b8"/><rect x="215" y="201" width="30" height="30" fill="#b8b8b8"/><rect x="107" y="255" width="30" height="30" fill="#b8b8b8"/><rect x="161" y="255" width="30" height="30" fill="#b8b8b8"/><rect x="215" y="255" width="30" height="30" fill="#b8b8b8"/><circle cx="176" cy="216" r="8" fill="#b8b8b8"/><rect x="110" y="380" width="9" height="156" fill="#b8b8b8"/><rect x="128" y="402" width="70" height="50" rx="4" fill="#b8b8b8"/><rect x="128" y="470" width="114" height="46" rx="4" fill="#b8b8b8"/><rect x="110" y="635" width="80" height="80" fill="#b8b8b8"/><rect x="152" y="678" width="90" height="88" fill="#b8b8b8"/><rect x="152" y="678" width="38" height="37" fill="#8a8a8a" stroke="#444" stroke-width="7"/></g>
<g transform="translate(524,260) scale(0.17340)"><rect x="45" y="108" width="236" height="192" rx="12" fill="#1f1f1f"/><circle cx="176" cy="210" r="51" fill="#b8b8b8"/><circle cx="176" cy="210" r="70" fill="none" stroke="#e0e0e0" stroke-width="10" stroke-dasharray="22 14.6"/><rect x="132" y="392" width="113" height="113" fill="none" stroke="#b8b8b8" stroke-width="9"/><rect x="105" y="452" width="46" height="46" fill="#323232" stroke="#b8b8b8" stroke-width="9"/><rect x="127" y="476" width="48" height="46" fill="#555" stroke="#b8b8b8" stroke-width="9"/></g>
<g transform="translate(524,380) scale(0.17340)"><rect x="103" y="73" width="137" height="92" rx="6" fill="#b8b8b8"/><rect x="109" y="79" width="40" height="37" fill="#585858"/><rect x="153" y="79" width="40" height="37" fill="#8e8e8e"/><rect x="197" y="79" width="38" height="37" fill="#484848"/><rect x="109" y="121" width="40" height="38" fill="#4c4c4c"/><rect x="153" y="121" width="40" height="38" fill="#545454"/><rect x="197" y="121" width="38" height="38" fill="#5c5c5c"/><rect x="138" y="388" width="75" height="53" rx="4" fill="#b8b8b8"/><path d="M 150 392 L 133 352 C 100 330 110 305 128 298 C 150 310 152 335 148 350 L 165 392 Z" fill="#b8b8b8"/><path d="M 170 392 L 160 322 L 148 318 L 150 300 L 160 300 L 158 272 L 172 272 L 175 300 L 186 302 L 186 318 L 175 322 L 186 392 Z" fill="#b8b8b8"/><path d="M 188 392 L 205 340 C 190 325 200 305 222 308 C 240 312 250 330 245 345 C 235 335 225 340 218 345 L 203 392 Z" fill="#b8b8b8"/><circle cx="176" cy="560" r="34" fill="#b8b8b8"/><circle cx="141" cy="604" r="34" fill="#b8b8b8"/><circle cx="212" cy="604" r="34" fill="#b8b8b8"/><path d="M 170 590 H 183 C 183 625 190 645 222 655 V 668 H 128 V 655 C 162 645 170 625 170 590 Z" fill="#b8b8b8"/></g>
<g transform="translate(524,505) scale(0.17340)"><path d="M 160 200 C 150 175 175 168 200 170 C 245 175 265 205 258 240 C 250 275 205 292 160 288 C 115 284 88 262 93 235 C 98 212 130 208 160 200 Z" fill="#b8b8b8"/><circle cx="130" cy="248" r="15" fill="#323232"/><circle cx="171" cy="262" r="13" fill="#323232"/><circle cx="207" cy="256" r="11" fill="#323232"/><circle cx="231" cy="235" r="10" fill="#323232"/><circle cx="222" cy="208" r="9" fill="#323232"/><path d="M 112 652 L 112.0 520.0 A 132 132 0 0 1 141.4 523.3 Z" fill="#2c2c2c"/><path d="M 112 652 L 141.4 523.3 A 132 132 0 0 1 169.3 533.1 Z" fill="#484848"/><path d="M 112 652 L 169.3 533.1 A 132 132 0 0 1 194.3 548.8 Z" fill="#606060"/><path d="M 112 652 L 194.3 548.8 A 132 132 0 0 1 215.2 569.7 Z" fill="#7a7a7a"/><path d="M 112 652 L 215.2 569.7 A 132 132 0 0 1 230.9 594.7 Z" fill="#949494"/><path d="M 112 652 L 230.9 594.7 A 132 132 0 0 1 240.7 622.6 Z" fill="#b0b0b0"/><path d="M 112 652 L 240.7 622.6 A 132 132 0 0 1 244.0 652.0 Z" fill="#d6d6d6"/><path d="M 112 652 L 112 520 A 132 132 0 0 1 244 652 Z" fill="none" stroke="#b8b8b8" stroke-width="8" stroke-linejoin="round"/></g>
<g transform="translate(524,630) scale(0.17340)"><rect x="102" y="166" width="147" height="7" fill="#b8b8b8"/><rect x="102" y="199" width="147" height="18" fill="#b8b8b8"/><rect x="102" y="241" width="147" height="29" fill="#b8b8b8"/><circle cx="150" cy="446" r="58" fill="#b8b8b8"/><circle cx="190" cy="486" r="52" fill="#666" stroke="#b8b8b8" stroke-width="9"/><path d="M 140 470 A 52 52 0 0 0 215 440 A 58 58 0 0 1 140 470 Z" fill="#777"/><path d="M 165 637 A 72 72 0 0 1 165 778" fill="none" stroke="#b8b8b8" stroke-width="9"/><circle cx="160" cy="706" r="63" fill="#323232"/><circle cx="158" cy="706" r="60" fill="#b8b8b8"/><rect x="153" y="624" width="26" height="26" rx="3" fill="#b8b8b8"/><rect x="225" y="695" width="26" height="26" rx="3" fill="#b8b8b8"/><rect x="153" y="765" width="26" height="26" rx="3" fill="#b8b8b8"/></g>
<rect x="564.5" y="800" width="1.6" height="27" fill="#b8b8b8"/>
</svg>
<div class="t" style="left:543.5px;top:802px;font-size:27px;color:#b8b8b8">A</div>
<div class="t" style="left:544px;top:841.5px;font-size:32px;color:#b8b8b8">¶</div>
<div class="a" id="doc" style="left:585px;top:97px;width:908px;height:768px;background:#fff">
 <div class="a" style="left:0;top:0;width:908px;height:45px;background:#262626;border-top:1px solid #1e1e1e"></div>
 <div class="a" style="left:448px;top:1px;width:348px;height:44px;background:#323232;border-right:1px solid #202020"></div>
 <div class="t" style="left:15px;top:16px;font-size:16px;font-weight:bold;color:#929292;letter-spacing:0.1px;word-spacing:0.5px">Untitled-2 [Recovered]* @ 66.06 % (RGB/Preview)</div>
 <svg style="left:425px;top:17px" width="10" height="10" viewBox="0 0 10 10"><path d="M1 1 L9 9 M9 1 L1 9" stroke="#a0a0a0" stroke-width="1.4"/></svg>
 <div class="t" style="left:462px;top:16px;font-size:16px;font-weight:bold;color:#ececec;letter-spacing:0.1px;word-spacing:0.5px">Untitled-1* @ 66.06 % (RGB/Preview)</div>
 <svg style="left:775px;top:17px" width="10" height="10" viewBox="0 0 10 10"><path d="M1 1 L9 9 M9 1 L1 9" stroke="#e6e6e6" stroke-width="1.6"/></svg>
 <div class="a" style="left:0;top:45px;width:908px;height:41px;background:#3a3a3a"></div>
 <div class="a" style="left:0;top:86px;width:908px;height:1px;background:#111"></div>
 <div class="a" style="left:0;top:87px;width:1px;height:681px;background:#0a0a0a"></div>
<svg style="left:0;top:87px;overflow:hidden" width="908" height="681" viewBox="585 184 908 681">
<defs>
<filter id="bigsh" x="-30%" y="-30%" width="160%" height="160%"><feGaussianBlur stdDeviation="12.0"/></filter>
<filter id="hsh" x="-30%" y="-30%" width="160%" height="160%"><feGaussianBlur stdDeviation="10"/></filter>
<filter id="tsh" x="-10%" y="-10%" width="120%" height="120%"><feGaussianBlur stdDeviation="4"/></filter>
<filter id="fsh" x="-10%" y="-10%" width="120%" height="120%"><feGaussianBlur stdDeviation="4"/></filter>
<clipPath id="redclip"><polygon points="1211.90,323.84 1268.71,498.50 1452.38,498.56 1303.82,606.57 1360.52,781.26 1211.90,673.36 1063.28,781.26 1119.98,606.57 971.42,498.56 1155.09,498.50"/></clipPath>
</defs>
<g opacity="0.75" filter="url(#bigsh)"><polygon transform="translate(26.4,19)" points="1211.90,323.84 1268.71,498.50 1452.38,498.56 1303.82,606.57 1360.52,781.26 1211.90,673.36 1063.28,781.26 1119.98,606.57 971.42,498.56 1155.09,498.50" fill="#000" stroke="#000" stroke-width="48" stroke-linejoin="round"/><polygon transform="translate(14.5,27)" points="1211.90,323.84 1268.71,498.50 1452.38,498.56 1303.82,606.57 1360.52,781.26 1211.90,673.36 1063.28,781.26 1119.98,606.57 971.42,498.56 1155.09,498.50" fill="#000" stroke="#000" stroke-width="48" stroke-linejoin="round"/></g>
<g transform="translate(7,7)" opacity="0.6" filter="url(#tsh)"><polygon points="1211.90,323.84 1268.71,498.50 1452.38,498.56 1303.82,606.57 1360.52,781.26 1211.90,673.36 1063.28,781.26 1119.98,606.57 971.42,498.56 1155.09,498.50" fill="#000"/></g>
<g opacity="0.75" filter="url(#hsh)"><polygon points="1211.90,323.84 1268.71,498.50 1452.38,498.56 1303.82,606.57 1360.52,781.26 1211.90,673.36 1063.28,781.26 1119.98,606.57 971.42,498.56 1155.09,498.50" fill="#000" stroke="#000" stroke-width="6" stroke-linejoin="round"/></g>
<polygon points="1211.90,323.84 1268.71,498.50 1452.38,498.56 1303.82,606.57 1360.52,781.26 1211.90,673.36 1063.28,781.26 1119.98,606.57 971.42,498.56 1155.09,498.50" fill="#ff0000"/>
<g clip-path="url(#redclip)"><g transform="translate(8,8)" opacity="0.55" filter="url(#fsh)"><polygon points="1211.90,357.50 1261.16,508.90 1420.37,508.96 1291.60,602.60 1340.74,754.04 1211.90,660.50 1083.06,754.04 1132.20,602.60 1003.43,508.96 1162.64,508.90" fill="#000"/></g></g>
<polygon points="1211.90,357.50 1261.16,508.90 1420.37,508.96 1291.60,602.60 1340.74,754.04 1211.90,660.50 1083.06,754.04 1132.20,602.60 1003.43,508.96 1162.64,508.90" fill="#ffff00"/>
<polygon points="1211.90,357.50 1261.16,508.90 1420.37,508.96 1291.60,602.60 1340.74,754.04 1211.90,660.50 1083.06,754.04 1132.20,602.60 1003.43,508.96 1162.64,508.90" fill="none" stroke="#8ce66a" stroke-width="1"/>
<rect x="1003.5" y="357.5" width="417.0" height="396.0" fill="none" stroke="#6ad86a" stroke-width="1"/>
<rect x="999.5" y="352.5" width="8" height="8" fill="#fff" stroke="#6ad86a" stroke-width="1.2"/>
<rect x="1417.5" y="352.5" width="8" height="8" fill="#fff" stroke="#6ad86a" stroke-width="1.2"/>
<rect x="999.5" y="749.5" width="8" height="8" fill="#fff" stroke="#6ad86a" stroke-width="1.2"/>
<rect x="1417.5" y="749.5" width="8" height="8" fill="#fff" stroke="#6ad86a" stroke-width="1.2"/>
<circle cx="1211.5" cy="576" r="2.6" fill="#5fe05f"/>
<circle cx="1421" cy="509" r="6.3" fill="#fff" stroke="#d8f0d8" stroke-width="1"/>
<circle cx="1131.5" cy="601.5" r="6.3" fill="#fff" stroke="#d8f0d8" stroke-width="1"/>
<circle cx="1401.5" cy="514.5" r="4.6" fill="#fff" stroke="#6ad86a" stroke-width="1.2"/><circle cx="1401.5" cy="514.5" r="2.2" fill="#5fe05f"/>
<circle cx="1113" cy="608" r="4.6" fill="#fff" stroke="#6ad86a" stroke-width="1.2"/><circle cx="1113" cy="608" r="2.2" fill="#5fe05f"/>
<circle cx="1421" cy="417" r="10.5" fill="#fff" stroke="#2a6fc8" stroke-width="1.6"/><path d="M1416.8 414.5 L1421 411 L1425.2 414.5 M1416.8 419.5 L1421 423 L1425.2 419.5" fill="none" stroke="#2a6fc8" stroke-width="1.5"/>
</svg>
</div>
<div class="a" id="appear" style="left:583px;top:257px;width:347px;height:531px;background:#323232;box-shadow:5px 2px 6px -2px rgba(0,0,0,0.4);clip-path:inset(-2px -14px 0 0)">
<div class="a" style="left:0;top:-1px;width:347px;height:7px;background:#1e1e1e"></div>
<div class="a" style="left:0;top:6px;width:347px;height:39px;background:#262626"></div>
<div class="a" style="left:111px;top:6px;width:128px;height:39px;background:#2b2b2b"></div>
<div class="a" style="left:0;top:6px;width:111px;height:39px;background:#323232"></div>
<div class="t" style="left:14px;top:15px;font-size:15px;font-weight:bold;color:#ececec;letter-spacing:-0.55px">Appearance</div>
<div class="t" style="left:124px;top:15px;font-size:15px;font-weight:bold;color:#8e8e8e;letter-spacing:-0.4px">Graphic Styles</div>
<svg style="left:285px;top:21px" width="13" height="10" viewBox="0 0 13 10"><path d="M5 0.8 L1 5 L5 9.2 M11.5 0.8 L7.5 5 L11.5 9.2" fill="none" stroke="#b4b4b4" stroke-width="1.3"/></svg>
<div class="a" style="left:310px;top:18px;width:1px;height:16px;background:#8a8a8a"></div>
<div class="a" style="left:322px;top:20px;width:15px;height:1.2px;background:#9c9c9c;box-shadow:0 4.5px 0 #9c9c9c,0 9px 0 #9c9c9c"></div>
<div class="a" style="left:9px;top:55px;width:328px;height:434px;border:1px solid #3e3e3e;border-radius:3px;background:#323232"></div>
<div class="a" style="left:9px;top:95px;width:328px;height:36px;background:#364e68"></div>
<div class="a" style="left:10px;top:131px;width:326px;height:1px;background:#3c3c3c"></div>
<div class="a" style="left:10px;top:169px;width:326px;height:1px;background:#3c3c3c"></div>
<div class="a" style="left:10px;top:206px;width:326px;height:1px;background:#3c3c3c"></div>
<div class="a" style="left:10px;top:244px;width:326px;height:1px;background:#3c3c3c"></div>
<div class="a" style="left:10px;top:281px;width:326px;height:1px;background:#3c3c3c"></div>
<div class="a" style="left:10px;top:319px;width:326px;height:1px;background:#3c3c3c"></div>
<div class="a" style="left:10px;top:356px;width:326px;height:1px;background:#3c3c3c"></div>
<div class="a" style="left:10px;top:394px;width:326px;height:1px;background:#3c3c3c"></div>
<div class="a" style="left:45px;top:95px;width:1px;height:299px;background:#2a2a2a"></div>
<svg style="left:13px;top:61px" width="29" height="29" viewBox="0 0 29 29"><defs><filter id="tb" x="-50%" y="-50%" width="200%" height="200%"><feGaussianBlur stdDeviation="2"/></filter></defs><rect x="0.5" y="0.5" width="28" height="28" fill="#fff" stroke="#111" stroke-width="1"/><rect x="9.5" y="10.5" width="11" height="11" fill="#0a0a0a" filter="url(#tb)"/><rect x="8" y="8" width="8" height="8" fill="#ffcc00" stroke="#e01000" stroke-width="1.5"/></svg>
<div class="t" style="left:84px;top:68px;font-size:16px;font-weight:bold;color:#e6e6e6;letter-spacing:0px">Path</div>
<svg style="left:16px;top:107px" width="20" height="13" viewBox="0 0 20 13"><path d="M0 6.4 C4.2 -1.6 15.8 -1.6 20 6.4 C15.8 14.4 4.2 14.4 0 6.4 Z" fill="#c0c4c8"/><circle cx="10" cy="6.4" r="3.7" fill="#c0c4c8" stroke="#364e68" stroke-width="1.7"/><circle cx="11.3" cy="5.2" r="0.9" fill="#364e68"/></svg>
<svg style="left:56px;top:109px" width="13" height="8" viewBox="0 0 13 8"><path d="M1 1 L6.5 6.5 L12 1" fill="none" stroke="#c8c8c8" stroke-width="1.6"/></svg>
<div class="t" style="left:84px;top:107px;font-size:15.5px;color:#dedede;letter-spacing:-0.4px">Fill:</div>
<div class="a dd" style="left:172px;top:99px;width:29px;height:30px"></div>
<div class="a" style="left:144px;top:100px;width:29px;height:28px;background:#ffff00;border:1px solid #e6e6b4"></div>
<svg style="left:180px;top:110px" width="13" height="8" viewBox="0 0 13 8"><path d="M1 1 L6.5 6.5 L12 1" fill="none" stroke="#c8c8c8" stroke-width="1.6"/></svg>
<svg style="left:16px;top:144px" width="20" height="13" viewBox="0 0 20 13"><path d="M0 6.4 C4.2 -1.6 15.8 -1.6 20 6.4 C15.8 14.4 4.2 14.4 0 6.4 Z" fill="#b8b8b8"/><circle cx="10" cy="6.4" r="3.7" fill="#b8b8b8" stroke="#323232" stroke-width="1.7"/><circle cx="11.3" cy="5.2" r="0.9" fill="#323232"/></svg>
<div class="t dot" style="left:119px;top:144px;font-size:15.5px;color:#dedede;letter-spacing:-0.55px;padding-bottom:1px">Drop Shadow</div>
<div class="t" style="left:310px;top:139px;font-size:22px;font-style:italic;color:#b8b8b8;letter-spacing:-0.6px">fx</div>
<svg style="left:16px;top:181px" width="20" height="13" viewBox="0 0 20 13"><path d="M0 6.4 C4.2 -1.6 15.8 -1.6 20 6.4 C15.8 14.4 4.2 14.4 0 6.4 Z" fill="#5c5c5c"/><circle cx="10" cy="6.4" r="3.7" fill="#5c5c5c" stroke="#323232" stroke-width="1.7"/><circle cx="11.3" cy="5.2" r="0.9" fill="#323232"/></svg>
<div class="t dot" style="left:119px;top:182px;font-size:15.5px;color:#dedede;letter-spacing:-0.3px;padding-bottom:1px">Opacity:</div>
<div class="t" style="left:182px;top:182px;font-size:15.5px;color:#dedede;letter-spacing:-0.4px">Default</div>
<svg style="left:16px;top:219px" width="20" height="13" viewBox="0 0 20 13"><path d="M0 6.4 C4.2 -1.6 15.8 -1.6 20 6.4 C15.8 14.4 4.2 14.4 0 6.4 Z" fill="#b8b8b8"/><circle cx="10" cy="6.4" r="3.7" fill="#b8b8b8" stroke="#323232" stroke-width="1.7"/><circle cx="11.3" cy="5.2" r="0.9" fill="#323232"/></svg>
<svg style="left:56px;top:221px" width="13" height="8" viewBox="0 0 13 8"><path d="M1 1 L6.5 6.5 L12 1" fill="none" stroke="#c8c8c8" stroke-width="1.6"/></svg>
<div class="t dot" style="left:84px;top:219px;font-size:15.5px;color:#dedede;letter-spacing:-0.3px;padding-bottom:1px">Stroke:</div>
<div class="a" style="left:148px;top:213px;width:25px;height:25px;background:#ff0000;border:1px solid #000;box-shadow:inset 0 0 0 1.5px #fff, inset 0 0 0 2.5px #400"></div>
<div class="t" style="left:195px;top:219px;font-size:15.5px;color:#dedede;letter-spacing:-0.3px">20.641 pt</div>
<svg style="left:16px;top:256px" width="20" height="13" viewBox="0 0 20 13"><path d="M0 6.4 C4.2 -1.6 15.8 -1.6 20 6.4 C15.8 14.4 4.2 14.4 0 6.4 Z" fill="#b8b8b8"/><circle cx="10" cy="6.4" r="3.7" fill="#b8b8b8" stroke="#323232" stroke-width="1.7"/><circle cx="11.3" cy="5.2" r="0.9" fill="#323232"/></svg>
<div class="t dot" style="left:119px;top:256px;font-size:15.5px;color:#dedede;letter-spacing:-0.55px;padding-bottom:1px">Drop Shadow</div>
<div class="t" style="left:310px;top:251px;font-size:22px;font-style:italic;color:#b8b8b8;letter-spacing:-0.6px">fx</div>
<svg style="left:16px;top:294px" width="20" height="13" viewBox="0 0 20 13"><path d="M0 6.4 C4.2 -1.6 15.8 -1.6 20 6.4 C15.8 14.4 4.2 14.4 0 6.4 Z" fill="#5c5c5c"/><circle cx="10" cy="6.4" r="3.7" fill="#5c5c5c" stroke="#323232" stroke-width="1.7"/><circle cx="11.3" cy="5.2" r="0.9" fill="#323232"/></svg>
<div class="t dot" style="left:119px;top:294px;font-size:15.5px;color:#dedede;letter-spacing:-0.3px;padding-bottom:1px">Opacity:</div>
<div class="t" style="left:182px;top:294px;font-size:15.5px;color:#dedede;letter-spacing:-0.4px">Default</div>
<svg style="left:16px;top:331px" width="20" height="13" viewBox="0 0 20 13"><path d="M0 6.4 C4.2 -1.6 15.8 -1.6 20 6.4 C15.8 14.4 4.2 14.4 0 6.4 Z" fill="#b8b8b8"/><circle cx="10" cy="6.4" r="3.7" fill="#b8b8b8" stroke="#323232" stroke-width="1.7"/><circle cx="11.3" cy="5.2" r="0.9" fill="#323232"/></svg>
<div class="t dot" style="left:84px;top:332px;font-size:15.5px;color:#dedede;letter-spacing:-0.55px;padding-bottom:1px">Drop Shadow</div>
<div class="t" style="left:310px;top:326px;font-size:22px;font-style:italic;color:#b8b8b8;letter-spacing:-0.6px">fx</div>
<svg style="left:16px;top:369px" width="20" height="13" viewBox="0 0 20 13"><path d="M0 6.4 C4.2 -1.6 15.8 -1.6 20 6.4 C15.8 14.4 4.2 14.4 0 6.4 Z" fill="#5c5c5c"/><circle cx="10" cy="6.4" r="3.7" fill="#5c5c5c" stroke="#323232" stroke-width="1.7"/><circle cx="11.3" cy="5.2" r="0.9" fill="#323232"/></svg>
<div class="t dot" style="left:84px;top:369px;font-size:15.5px;color:#dedede;letter-spacing:-0.3px;padding-bottom:1px">Opacity:</div>
<div class="t" style="left:147px;top:369px;font-size:15.5px;color:#dedede;letter-spacing:-0.4px">Default</div>
<svg style="left:0;top:488px" width="347" height="32" viewBox="583 745 347 32">
<rect x="602.5" y="753.5" width="15" height="15" fill="none" stroke="#b4b4b4" stroke-width="2.6"/>
<rect x="641" y="753" width="16" height="16" fill="none" stroke="#b4b4b4" stroke-width="1.3"/><rect x="643.5" y="755.5" width="11" height="11" fill="#b4b4b4"/>
<circle cx="800" cy="761" r="7.6" fill="none" stroke="#b4b4b4" stroke-width="2.2"/><path d="M794.6 755.6 L805.4 766.4" stroke="#b4b4b4" stroke-width="2.2"/>
<rect x="833" y="753" width="16" height="16" fill="none" stroke="#b4b4b4" stroke-width="1.3"/><path d="M836.5 761 H845.5 M841 756.5 V765.5" stroke="#b4b4b4" stroke-width="1.3"/>
<path d="M871 755.5 H886 M875.5 755 V752.3 H881.5 V755" fill="none" stroke="#b4b4b4" stroke-width="1.5"/><path d="M872.5 757 L873.3 768.7 H883.7 L884.5 757" fill="none" stroke="#b4b4b4" stroke-width="1.5"/><path d="M876 758.5 V766.5 M878.5 758.5 V766.5 M881 758.5 V766.5" stroke="#b4b4b4" stroke-width="1.1"/>
<path d="M697 766 H702 L699.5 768.6 Z" fill="#b4b4b4"/>
</svg>
<div class="t" style="left:96px;top:491px;font-size:22px;font-style:italic;color:#b8b8b8;letter-spacing:-0.6px">fx</div>
<div class="a" style="left:0;top:519px;width:347px;height:12px;background:#2d2d2d;border-top:1px solid #1a1a1a"></div>
<div class="a grip" style="left:158px;top:522px;width:29px"></div>
</div>
</body>
</html>
